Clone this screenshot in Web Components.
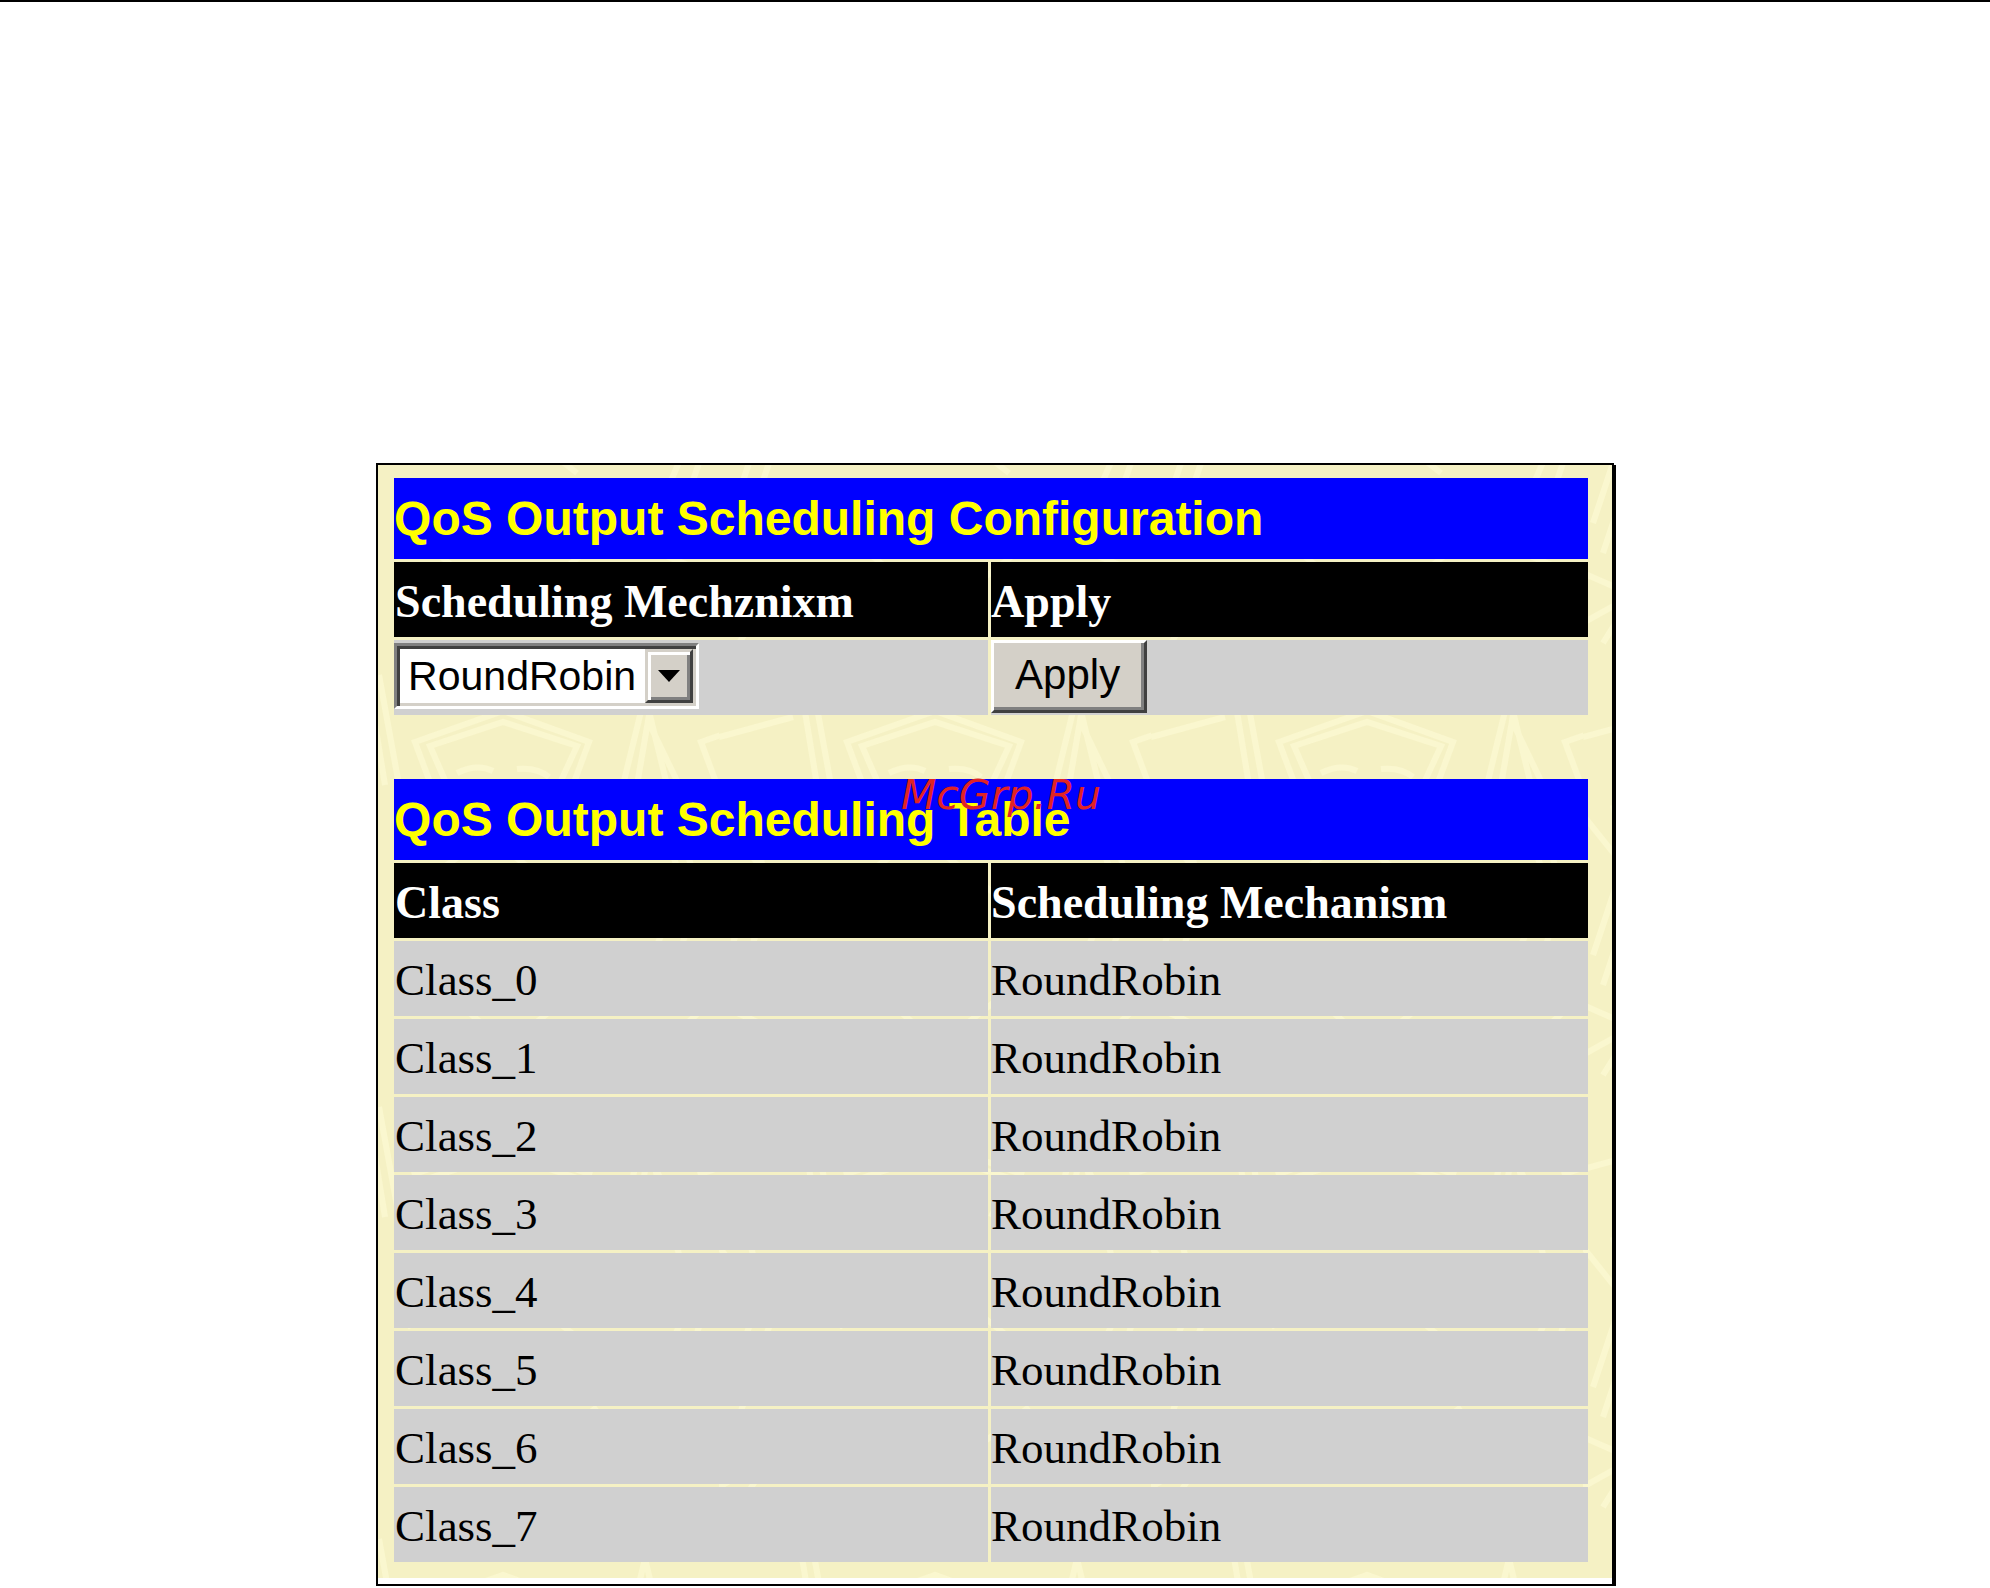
<!DOCTYPE html>
<html lang="en">
<head>
<meta charset="utf-8">
<title>QoS Output Scheduling</title>
<style>
  body { margin: 0; background: #fff; font-family: "Liberation Serif", serif; }
</style>
</head>
<body>
<qos-page>
  <qos-panel>
    <scheduling-form></scheduling-form>
    <scheduling-table></scheduling-table>
    <site-mark slot="mark">McGrp.Ru</site-mark>
  </qos-panel>
</qos-page>

<script>
const define = (name, html, setup) => customElements.define(name, class extends HTMLElement {
  constructor() {
    super();
    this.attachShadow({ mode: 'open' }).innerHTML = html;
    if (setup) setup(this.shadowRoot);
  }
});

const tableStyles = `
  :host { display: block; }
  table { width: 100%; table-layout: fixed; border-collapse: separate; border-spacing: 3px; font-size: 45px; line-height: 71px; color: #000; }
  col:first-child { width: 594px; }
  th, td { padding: 0; text-align: left; vertical-align: top; }
  td { background: #d0d0d0; padding-top: 4px; }
  th { background: #000; color: #fff; font-size: 46px; padding-top: 4px; }
  th:first-child, td:first-child { padding-left: 1px; }
  th.title { background: #00f; color: #ff0; font: bold 48px/81px "Liberation Sans", sans-serif; padding: 0; }
`;

define('qos-page', `
  <style>
    :host { display: block; border-top: 2px solid #000; padding-top: 461px; }
    main { width: 62.2%; margin: 0 auto; }
  </style>
  <main><slot></slot></main>
`);

define('qos-panel', `
  <style>
    :host { display: block; position: relative; box-sizing: border-box; border: 2px solid #000; box-shadow: 2px 2px #000; background: #fff; padding-bottom: 6px; }
    .paper { display: grid; background: #f5f1c4; }
    .paper > * { grid-area: 1 / 1; min-width: 0; }
    svg { width: 100%; height: 0; min-height: 100%; display: block; }
    .content { display: flex; flex-direction: column; gap: 58px; padding: 10px 21px 13px 13px; }
  </style>
  <div class="paper">
    <svg aria-hidden="true">
      <defs>
        <pattern id="motif" width="432" height="432" patternUnits="userSpaceOnUse" x="341" y="190">
          <g fill="none" stroke="#fcf9d2" stroke-width="6" opacity="0.8">
            <path d="M144 130 L128 87 L216 56 L302 87 L286 130 M160 130 L143 91 L216 67 L290 91 L272 130"/>
            <path d="M336 130 L358 40 L380 130 M350 130 L361 66 L392 130"/>
            <path d="M430 130 L414 87 L502 56 M0 82 L74 62 M80 20 L98 130 M92 20 L112 130"/>
            <path d="M170 118 Q190 108 206 116 M230 114 Q250 112 262 122"/>
            <path d="M0 160 L40 210 L10 300 M30 150 L50 240 L20 330 M0 350 L50 372 L0 400 M20 420 L45 380"/>
            <path d="M376 170 L396 230 L370 290 M390 160 L412 240 L388 310 M372 330 L420 350 L376 390"/>
            <path d="M120 240 L200 180 L290 250 M150 330 L220 390 L310 320"/>
          </g>
        </pattern>
      </defs>
      <rect width="100%" height="100%" fill="url(#motif)"/>
    </svg>
    <div class="content"><slot></slot></div>
  </div>
  <slot name="mark"></slot>
`);

define('site-mark', `
  <style>
    :host { position: absolute; left: 0; right: 0; top: 306px; padding-left: 12px; text-align: center; font: italic 41px/48px "DejaVu Sans", sans-serif; color: #e02424; pointer-events: none; }
  </style>
  <slot></slot>
`);

define('classic-select', `
  <style>
    :host { display: inline-grid; vertical-align: top; }
    select, .arrow { grid-area: 1 / 1; }
    select { appearance: none; box-sizing: border-box; width: 305px; height: 66px; margin: 0; padding: 0 0 0 11px; border: 3px solid; border-color: #808080 #fff #fff #808080; border-radius: 0; box-shadow: inset 3px 3px #404040, inset -3px -3px #d4d0c8; background: #fff; color: #000; font: 41px/60px "Liberation Sans", sans-serif; outline: none; }
    .arrow { justify-self: end; align-self: center; display: grid; place-items: center; box-sizing: border-box; width: 48px; height: 54px; margin-right: 6px; background: #d4d0c8; border: 3px solid; border-color: #d4d0c8 #404040 #404040 #d4d0c8; box-shadow: inset 3px 3px #fff, inset -3px -3px #808080; pointer-events: none; }
    svg { width: 22px; height: 12px; display: block; }
  </style>
  <select aria-label="Scheduling Mechanism"><option>RoundRobin</option><option>Strict</option></select>
  <span class="arrow"><svg viewBox="0 0 22 12" aria-hidden="true"><path d="M0 0H22L11 12Z"/></svg></span>
`);

define('classic-button', `
  <style>
    :host { display: block; }
    button { display: block; box-sizing: border-box; height: 73px; margin: 0; padding: 0 24px 4px 21px; border: 3px solid; border-color: #fff #404040 #404040 #fff; border-radius: 0; box-shadow: inset -3px -3px #808080; background: #d4d0c8; color: #000; font: 42px/60px "Liberation Sans", sans-serif; }
  </style>
  <button type="button"><slot></slot></button>
`);

define('scheduling-form', `
  <style>${tableStyles}
    td { height: 75px; padding: 0; line-height: 0; }
    td:first-child { height: 72px; padding: 3px 0 0; }
  </style>
  <table>
    <colgroup><col><col></colgroup>
    <thead>
      <tr><th class="title" colspan="2">QoS Output Scheduling Configuration</th></tr>
      <tr><th scope="col">Scheduling Mechznixm</th><th scope="col">Apply</th></tr>
    </thead>
    <tbody><tr><td><classic-select></classic-select></td><td><classic-button>Apply</classic-button></td></tr></tbody>
  </table>
`);

define('scheduling-table', `
  <style>${tableStyles}</style>
  <table>
    <colgroup><col><col></colgroup>
    <thead>
      <tr><th class="title" colspan="2">QoS Output Scheduling Table</th></tr>
      <tr><th scope="col">Class</th><th scope="col">Scheduling Mechanism</th></tr>
    </thead>
    <tbody></tbody>
  </table>
`, root => {
  const body = root.querySelector('tbody');
  for (let i = 0; i < 8; i++) {
    const row = body.insertRow();
    row.insertCell().textContent = 'Class_' + i;
    row.insertCell().textContent = 'RoundRobin';
  }
});
</script>
</body>
</html>
